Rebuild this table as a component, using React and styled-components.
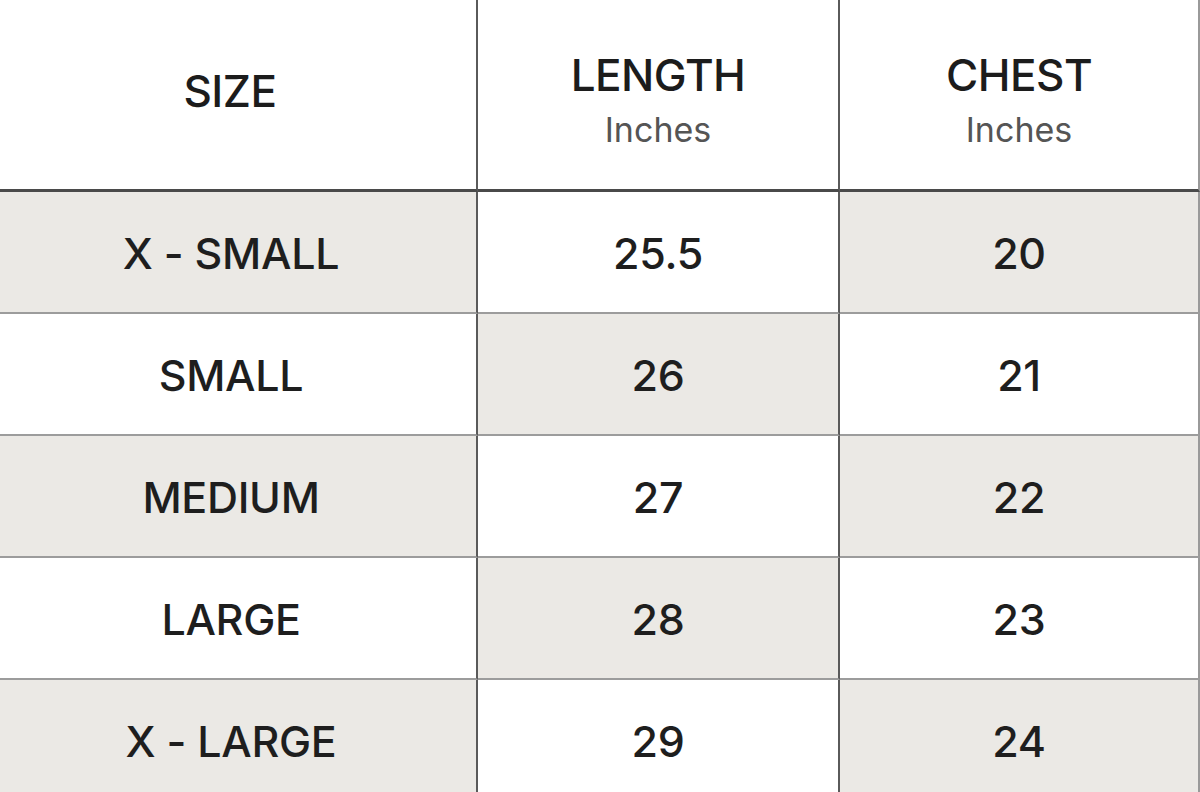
import React from "react";
import styled, { createGlobalStyle } from "styled-components";

const GlobalStyle = createGlobalStyle`
	html, body {
		margin: 0;
		padding: 0;
		background: #fff;
		overflow: hidden;
	}
	body {
		font-family: Inter, "Open Sans", sans-serif;
	}
`;

const Table = styled.div`
	width: 1200px;
	height: 792px;
	display: grid;
	grid-template-columns: 478px 362px 360px;
	grid-template-rows: 192px repeat(5, 122px);
	overflow: hidden;
`;

const HeadCell = styled.div`
	display: flex;
	flex-direction: column;
	justify-content: center;
	align-items: center;
	background: #fff;
	border-bottom: 3px solid #4a4a4a;
	border-right: 2px solid ${(p) => (p.last ? "#9a9a9a" : "#5a5a5a")};
	box-sizing: border-box;
	padding-top: ${(p) => (p.sub ? "10px" : "0")};
	padding-bottom: ${(p) => (p.sub ? "0" : "6px")};
	padding-right: ${(p) => (p.first ? "16px" : "0")};
`;

const HeadTitle = styled.div`
	font-size: 44px;
	font-weight: 500;
	color: #1c1c1c;
	letter-spacing: -0.5px;
	line-height: 1.1;
`;

const HeadSub = styled.div`
	font-size: 34px;
	font-weight: 400;
	color: #555;
	margin-top: 12px;
	line-height: 1.1;
`;

const Cell = styled.div`
	display: flex;
	justify-content: center;
	align-items: center;
	box-sizing: border-box;
	background: ${(p) => (p.shade ? "#ebe9e5" : "#fff")};
	border-bottom: 2px solid #9c9c9c;
	border-right: 2px solid ${(p) => (p.last ? "#9a9a9a" : "#5a5a5a")};
	font-size: 43px;
	font-weight: 500;
	color: #1e1e1e;
	letter-spacing: -0.3px;
	padding-top: 2px;
	padding-right: ${(p) => (p.first ? "14px" : "0")};
`;

const rows = [
	["X - SMALL", "25.5", "20"],
	["SMALL", "26", "21"],
	["MEDIUM", "27", "22"],
	["LARGE", "28", "23"],
	["X - LARGE", "29", "24"],
];

export default function App() {
	return (
		<>
			<GlobalStyle />
			<Table>
				<HeadCell first>
					<HeadTitle>SIZE</HeadTitle>
				</HeadCell>
				<HeadCell sub>
					<HeadTitle>LENGTH</HeadTitle>
					<HeadSub>Inches</HeadSub>
				</HeadCell>
				<HeadCell sub last>
					<HeadTitle>CHEST</HeadTitle>
					<HeadSub>Inches</HeadSub>
				</HeadCell>
				{rows.map((row, i) =>
					row.map((val, j) => (
						<Cell
							key={`${i}-${j}`}
							shade={(i + j) % 2 === 0}
							first={j === 0}
							last={j === 2}
						>
							{val}
						</Cell>
					))
				)}
			</Table>
		</>
	);
}
